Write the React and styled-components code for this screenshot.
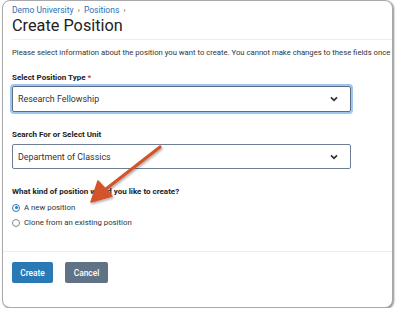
import React from "react";
import styled, { createGlobalStyle } from "styled-components";

const Global = createGlobalStyle`
  html, body { margin: 0; padding: 0; background: #fff; }
  body { font-family: Roboto, "Liberation Sans", Arial, sans-serif; }
`;

const Window = styled.div`
  position: relative;
  box-sizing: border-box;
  margin: 0 2px 0 2px;
  width: 391px;
  height: 308px;
  border: 1px solid #a9a9a9;
  border-radius: 8px;
  box-shadow: 1px 1px 2px rgba(0, 0, 0, 0.45);
  background: #fff;
  overflow: hidden;
  display: flex;
  flex-direction: column;
`;

const Header = styled.div`
  padding: 4px 0 0 9px;
`;

const Breadcrumb = styled.div`
  display: flex;
  gap: 4px;
  align-items: center;
  font-size: 8.5px;
  color: #2d70b4;
  line-height: 11px;
`;

const Sep = styled.span`
  color: #666;
  font-size: 8px;
`;

const Title = styled.h1`
  margin: 0;
  font-size: 16.3px;
  font-weight: 400;
  color: #222;
  line-height: 20px;
`;

const Divider = styled.div`
  height: 1px;
  background: #ececec;
  margin: ${(p) => p.$m || "0"};
`;

const Body = styled.div`
  padding: 0 0 0 9px;
  display: flex;
  flex-direction: column;
`;

const Intro = styled.p`
  margin: 7px 0 0;
  white-space: nowrap;
  font-size: 7.7px;
  color: #333;
  line-height: 11px;
`;

const Label = styled.div`
  font-size: 8px;
  font-weight: 700;
  color: #222;
  line-height: 11px;
  margin-top: ${(p) => p.$mt}px;
`;

const Req = styled.span`
  color: #d32f2f;
`;

const Select = styled.div`
  box-sizing: border-box;
  margin-top: ${(p) => p.$mt}px;
  width: 339px;
  height: ${(p) => p.$h}px;
  border: 1px solid ${(p) => (p.$focus ? "#5b6d84" : "#6e7f95")};
  box-shadow: ${(p) => (p.$focus ? "0 0 0 2px #9ec6ee" : "none")};
  border-radius: 2px;
  display: flex;
  align-items: center;
  justify-content: space-between;
  padding: 0 12px 0 5px;
  font-size: 8.9px;
  color: #333;
`;

const Chevron = () => (
  <svg width="8" height="6" viewBox="0 0 8 6">
    <path d="M1 1.3 L4 4.3 L7 1.3" fill="none" stroke="#333" strokeWidth="1.8" />
  </svg>
);

const Radios = styled.div`
  display: flex;
  flex-direction: column;
  gap: 4px;
  margin-top: 5px;
`;

const RadioRow = styled.label`
  display: flex;
  align-items: center;
  gap: 4px;
  font-size: 7.8px;
  color: #333;
  line-height: 11px;
`;

const RadioDot = styled.span`
  box-sizing: border-box;
  width: 8px;
  height: 8px;
  border-radius: 50%;
  border: 1px solid ${(p) => (p.$on ? "#2b7bbf" : "#888")};
  display: flex;
  align-items: center;
  justify-content: center;
  &::after {
    content: "";
    width: 3px;
    height: 3px;
    border-radius: 50%;
    background: ${(p) => (p.$on ? "#2b7bbf" : "transparent")};
  }
`;

const Footer = styled.div`
  display: flex;
  gap: 12px;
  padding: 10px 0 0 9px;
`;

const Button = styled.button`
  box-sizing: border-box;
  height: 21px;
  width: ${(p) => p.$w}px;
  padding: 0;
  border: none;
  border-radius: 2px;
  background: ${(p) => (p.$primary ? "#2879b4" : "#607285")};
  color: #fff;
  font-family: inherit;
  font-size: 8.4px;
  font-weight: 500;
`;

const Arrow = styled.svg`
  position: absolute;
  left: 0;
  top: 0;
  pointer-events: none;
`;

export default function App() {
  return (
    <>
      <Global />
      <Window>
        <Header>
          <Breadcrumb>
            <span>Demo University</span>
            <Sep>›</Sep>
            <span>Positions</span>
            <Sep>›</Sep>
          </Breadcrumb>
          <Title>Create Position</Title>
        </Header>
        <Divider $m="3px 0 0 9px" />
        <Body>
          <Intro>
            Please select information about the position you want to create. You cannot make changes to these fields once
          </Intro>
          <Label $mt={14}>
            Select Position Type <Req>*</Req>
          </Label>
          <Select $mt={3} $h={26} $focus>
            <span>Research Fellowship</span>
            <Chevron />
          </Select>
          <Label $mt={17}>Search For or Select Unit</Label>
          <Select $mt={4} $h={25}>
            <span>Department of Classics</span>
            <Chevron />
          </Select>
          <Label $mt={17}>What kind of position would you like to create?</Label>
          <Radios>
            <RadioRow>
              <RadioDot $on />A new position
            </RadioRow>
            <RadioRow>
              <RadioDot />Clone from an existing position
            </RadioRow>
          </Radios>
        </Body>
        <Divider $m="23px 0 0 0" />
        <Footer>
          <Button $primary $w={41}>Create</Button>
          <Button $w={43}>Cancel</Button>
        </Footer>
        <Arrow width="396" height="312" viewBox="0 0 396 312">
          <defs>
            <filter id="sh" x="-20%" y="-20%" width="140%" height="140%">
              <feDropShadow dx="1" dy="1.5" stdDeviation="1.2" floodColor="#000" floodOpacity="0.35" />
            </filter>
          </defs>
          <g filter="url(#sh)">
            <line x1="157" y1="146" x2="103" y2="188" stroke="#d3532b" strokeWidth="3.2" strokeLinecap="round" />
            <path d="M88 201 L95 180 L109 195 Z" fill="#d3532b" stroke="#d3532b" strokeWidth="1.5" strokeLinejoin="round" />
          </g>
        </Arrow>
      </Window>
    </>
  );
}
